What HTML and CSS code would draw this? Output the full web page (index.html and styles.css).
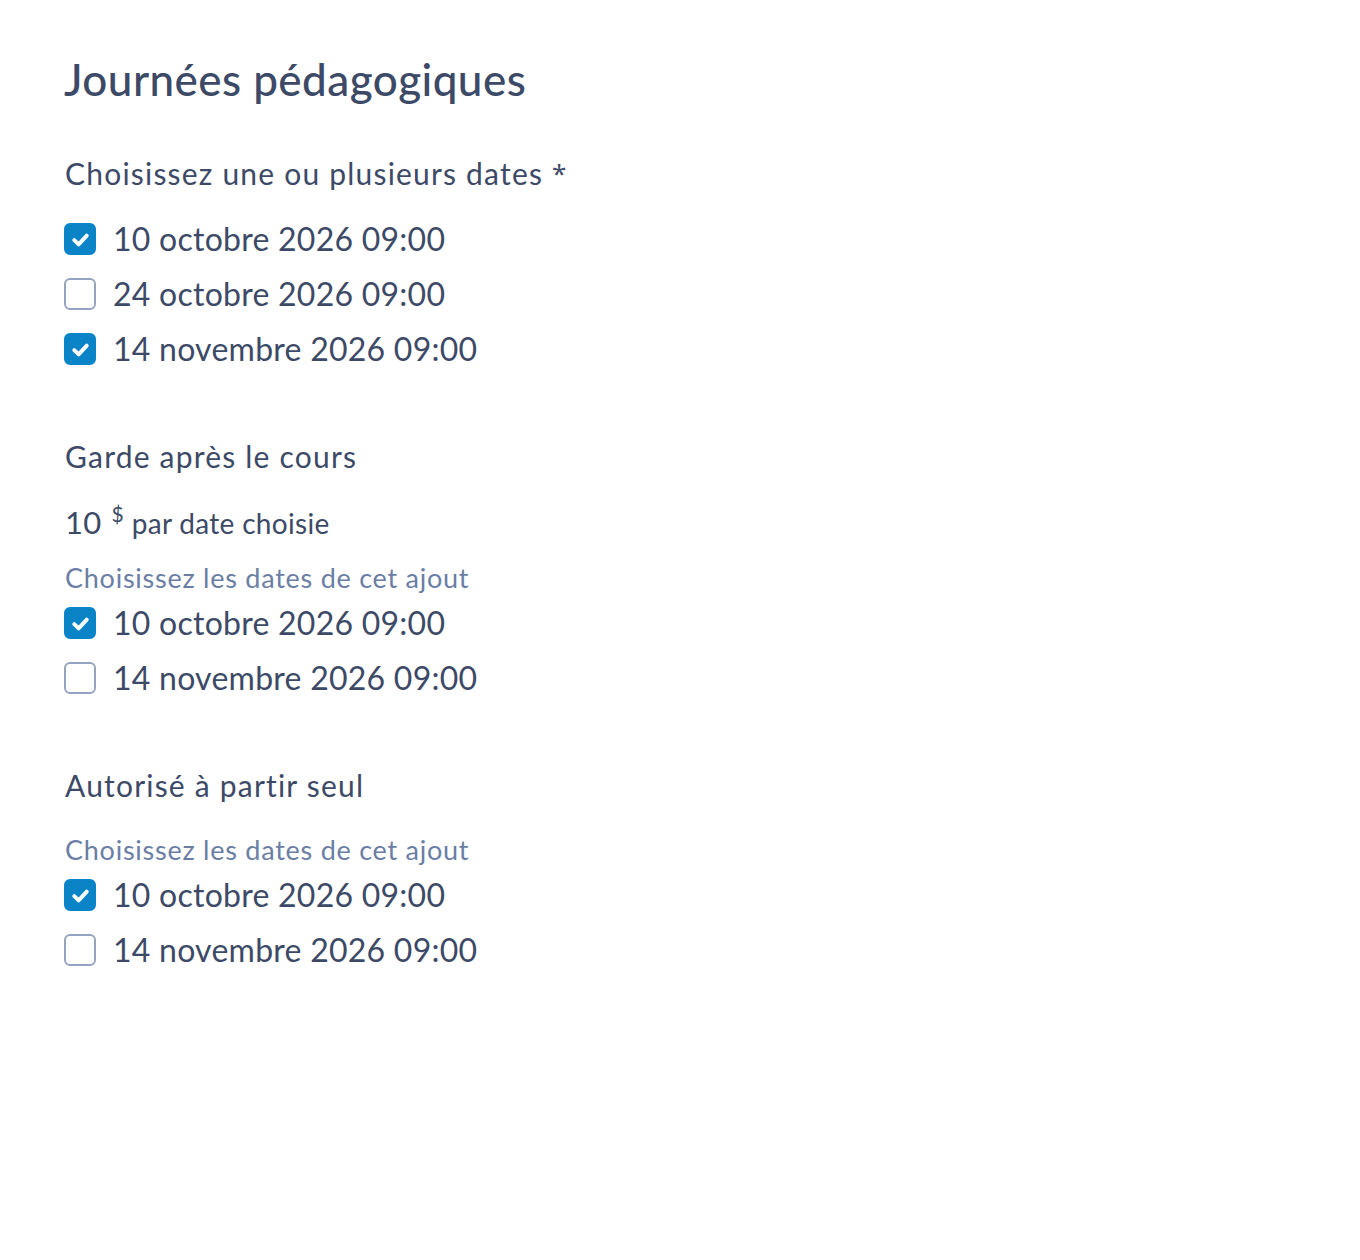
FILE: index.html
```html
<!DOCTYPE html>
<html lang="fr">
<head>
<meta charset="utf-8">
<link rel="stylesheet" href="styles.css">
</head>
<body>
<main class="page">
  <h1 class="title">Journées pédagogiques</h1>

  <section class="group first">
    <div class="label">Choisissez une ou plusieurs dates <span class="req">*</span></div>
    <ul class="options">
      <li class="option"><span class="box checked"><svg viewBox="0 0 16 16"><path d="M4.3 8.4l2.6 2.5 4.8-5.2"/></svg></span><span class="opt-text">10 octobre 2026 09:00</span></li>
      <li class="option"><span class="box"></span><span class="opt-text">24 octobre 2026 09:00</span></li>
      <li class="option"><span class="box checked"><svg viewBox="0 0 16 16"><path d="M4.3 8.4l2.6 2.5 4.8-5.2"/></svg></span><span class="opt-text">14 novembre 2026 09:00</span></li>
    </ul>
  </section>

  <section class="group">
    <div class="label">Garde après le cours</div>
    <div class="price"><span class="amount">10</span><sup class="cur">$</sup><span class="per">par date choisie</span></div>
    <div class="hint">Choisissez les dates de cet ajout</div>
    <ul class="options tight">
      <li class="option"><span class="box checked"><svg viewBox="0 0 16 16"><path d="M4.3 8.4l2.6 2.5 4.8-5.2"/></svg></span><span class="opt-text">10 octobre 2026 09:00</span></li>
      <li class="option"><span class="box"></span><span class="opt-text">14 novembre 2026 09:00</span></li>
    </ul>
  </section>

  <section class="group">
    <div class="label">Autorisé à partir seul</div>
    <div class="hint spaced">Choisissez les dates de cet ajout</div>
    <ul class="options tight">
      <li class="option"><span class="box checked"><svg viewBox="0 0 16 16"><path d="M4.3 8.4l2.6 2.5 4.8-5.2"/></svg></span><span class="opt-text">10 octobre 2026 09:00</span></li>
      <li class="option"><span class="box"></span><span class="opt-text">14 novembre 2026 09:00</span></li>
    </ul>
  </section>
</main>
</body>
</html>
```
FILE: styles.css
```css
* { box-sizing: border-box; }
html, body { margin: 0; padding: 0; background: #ffffff; }
body {
  font-family: "Lato", "Noto Sans", sans-serif;
  color: #3d4a67;
}
.page {
  padding: 53px 64px 0 64px;
}
.title {
  margin: 0;
  font-size: 44px;
  font-weight: 500;
  letter-spacing: 0.45px;
  line-height: 52px;
  color: #3d4a67;
}
.group { margin-top: 48px; }
.group + .group { margin-top: 67px; }
.label {
  font-size: 30px;
  letter-spacing: 1.2px;
  line-height: 40px;
  padding-left: 1px;
}
.req {
  font-family: "Noto Sans", sans-serif;
  font-size: 26px;
  letter-spacing: 0;
  position: relative;
  top: -2px;
}
.options {
  list-style: none;
  margin: 24px 0 0 0;
  padding: 0;
  display: flex;
  flex-direction: column;
  gap: 15px;
}
.options.tight { margin-top: 8px; }
.option {
  display: flex;
  align-items: center;
  height: 40px;
}
.box {
  width: 32px;
  height: 32px;
  border: 2px solid #96a3c0;
  border-radius: 6px;
  background: #fff;
  display: flex;
  align-items: center;
  justify-content: center;
  flex: none;
}
.box.checked {
  background: #0a84c6;
  border-color: #0a84c6;
}
.box svg { width: 27px; height: 27px; }
.box svg path {
  fill: none;
  stroke: #ffffff;
  stroke-width: 2.3;
  stroke-linecap: round;
  stroke-linejoin: round;
}
.opt-text {
  margin-left: 17px;
  font-size: 32px;
  letter-spacing: 0.25px;
  line-height: 40px;
}
.price {
  margin-top: 26px;
  padding-left: 1px;
  display: flex;
  align-items: baseline;
  height: 40px;
}
.amount { font-size: 31px; line-height: 40px; letter-spacing: 0.3px; }
.cur {
  font-size: 21px;
  margin-left: 10px;
  position: relative;
  top: -12px;
  vertical-align: baseline;
  line-height: 1;
}
.per { font-size: 28px; margin-left: 8px; letter-spacing: 0.3px; }
.hint {
  margin-top: 19px;
  font-size: 27px;
  letter-spacing: 0.75px;
  line-height: 34px;
  color: #6b7ea6;
  padding-left: 1px;
}
.hint.spaced { margin-top: 28px; }
```
